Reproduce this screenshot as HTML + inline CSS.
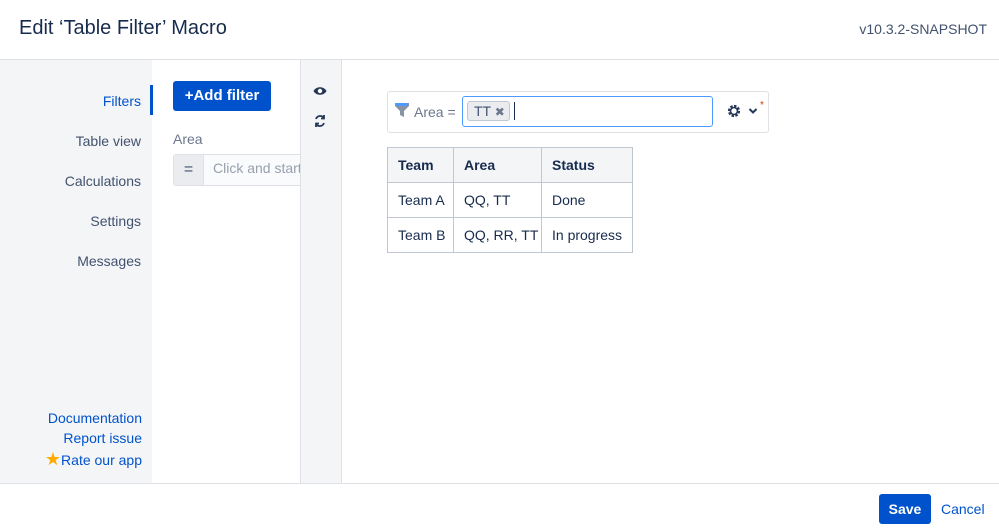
<!DOCTYPE html>
<html><head><meta charset="utf-8"><style>
*{box-sizing:border-box;margin:0;padding:0}
body{width:999px;height:530px;position:relative;font-family:"Liberation Sans",sans-serif;background:#fff;color:#172b4d;overflow:hidden}
.abs{position:absolute}
.hdr{left:0;top:0;width:999px;height:60px;border-bottom:1px solid #dfe1e6}
.side{left:0;top:60px;width:152px;height:423px;background:#f4f5f7}
.nav{left:0;width:141px;font-size:14px;color:#42526e;text-align:right;white-space:nowrap}
.link{left:0;width:142px;font-size:14px;color:#0052cc;text-align:right;white-space:nowrap}
.tool{left:300px;top:60px;width:42px;height:423px;background:#f4f5f7;border-left:1px solid #dfe1e6;border-right:1px solid #dfe1e6}
.foot{left:0;top:483px;width:999px;height:47px;border-top:1px solid #dfe1e6}
table{border-collapse:collapse;font-size:14px;table-layout:fixed;width:245px}
td,th{border:1px solid #c1c7d0;height:35px;padding:0 10px;text-align:left;color:#172b4d;font-weight:normal;white-space:nowrap;overflow:hidden}
th{background:#f4f5f7;font-weight:bold}
</style></head><body>
<div class="abs hdr"></div>
<div class="abs" style="left:19px;top:17px;font-size:20px;color:#172b4d">Edit ‘Table Filter’ Macro</div>
<div class="abs" style="right:12px;top:21px;font-size:14px;color:#42526e">v10.3.2-SNAPSHOT</div>
<div class="abs side"></div>
<div class="abs" style="left:150px;top:85px;width:3px;height:30px;background:#0052cc"></div>
<div class="abs nav" style="top:93px;color:#0052cc">Filters</div>
<div class="abs nav" style="top:133px">Table view</div>
<div class="abs nav" style="top:173px">Calculations</div>
<div class="abs nav" style="top:213px">Settings</div>
<div class="abs nav" style="top:253px">Messages</div>
<div class="abs link" style="top:410px">Documentation</div>
<div class="abs link" style="top:430px">Report issue</div>
<div class="abs link" style="top:449px"><span style="color:#ffab00;font-size:18px">★</span>Rate our app</div>
<div class="abs" style="left:173px;top:81px;width:98px;height:30px;background:#0052cc;border-radius:3px;color:#fff;font-weight:bold;font-size:15px;line-height:30px;text-align:center">+Add filter</div>
<div class="abs" style="left:173px;top:131px;font-size:14px;color:#6b778c">Area</div>
<div class="abs" style="left:173px;top:154px;width:128px;height:32px;border:1px solid #dfe1e6;border-right:none;border-radius:3px 0 0 3px;background:#fafbfc"></div>
<div class="abs" style="left:174px;top:155px;width:30px;height:30px;background:#ebecf0;border-right:1px solid #dfe1e6;text-align:center;line-height:30px;font-size:16px;color:#42526e">=</div>
<div class="abs" style="left:213px;top:160px;font-size:14px;color:#97a0af;white-space:nowrap;width:87px;overflow:hidden">Click and start</div>
<div class="abs tool"></div>
<svg class="abs" style="left:313px;top:85px" width="14" height="12" viewBox="0 0 14 12"><path d="M0.5 6C3 1 11 1 13.5 6C11 11 3 11 0.5 6Z" fill="#253858"/><circle cx="7" cy="6" r="2.2" fill="#fff"/></svg>
<svg class="abs" style="left:313px;top:114px" width="14" height="14" viewBox="0 0 14 14" fill="none" stroke="#253858" stroke-width="1.8"><path d="M3 5A4.5 4.5 0 0 1 11 4M11 9A4.5 4.5 0 0 1 3 10"/><path d="M11 1V4.5H8M3 13V9.5H6"/></svg>
<div class="abs" style="left:387px;top:91px;width:382px;height:42px;border:1px solid #dfe1e6;border-radius:3px"></div>
<svg class="abs" style="left:394px;top:102px" width="16" height="16" viewBox="0 0 16 16"><path d="M1 1H15V4L10 9V15L6 13V9L1 4Z" fill="#8993a4"/><rect x="2" y="1" width="12" height="3" fill="#4c9aff"/></svg>
<div class="abs" style="left:414px;top:104px;font-size:14px;color:#6b778c">Area =</div>
<div class="abs" style="left:462px;top:96px;width:251px;height:31px;border:1px solid #4c9aff;border-radius:3px"></div>
<div class="abs" style="left:467px;top:101px;width:43px;height:20px;background:#ebecf0;border:1px solid #c1c7d0;border-radius:3px;font-size:14px;color:#42526e;padding-left:6px;line-height:18px">TT <span style="font-size:12px;color:#6b778c">✖</span></div>
<div class="abs" style="left:514px;top:102px;width:1px;height:18px;background:#172b4d"></div>
<svg class="abs" style="left:726px;top:103px" width="16" height="16" viewBox="0 0 16 16"><circle cx="8" cy="8" r="5" fill="none" stroke="#253858" stroke-width="2.2" stroke-dasharray="2.5 1.4"/><circle cx="8" cy="8" r="3.5" fill="none" stroke="#253858" stroke-width="1.6"/></svg>
<svg class="abs" style="left:748px;top:107px" width="10" height="8" viewBox="0 0 10 8"><path d="M1.5 2L5 5.5L8.5 2" fill="none" stroke="#253858" stroke-width="2"/></svg>
<div class="abs" style="left:760px;top:100px;font-size:10px;color:#de350b">*</div>
<table class="abs" style="left:387px;top:147px">
<colgroup><col style="width:66px"><col style="width:88px"><col style="width:91px"></colgroup>
<tr><th>Team</th><th>Area</th><th>Status</th></tr>
<tr><td>Team A</td><td>QQ, TT</td><td>Done</td></tr>
<tr><td>Team B</td><td>QQ, RR, TT</td><td>In progress</td></tr>
</table>
<div class="abs foot"></div>
<div class="abs" style="left:879px;top:494px;width:52px;height:30px;background:#0052cc;border-radius:3px;color:#fff;font-weight:bold;font-size:14px;line-height:30px;text-align:center">Save</div>
<div class="abs" style="left:941px;top:501px;font-size:14px;color:#0052cc">Cancel</div>
</body></html>
